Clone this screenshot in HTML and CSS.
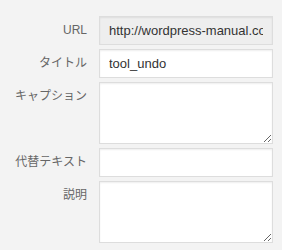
FILE: index.html
```html
<!DOCTYPE html>
<html lang="ja">
<head>
    <meta charset="UTF-8">
    <title>Attachment details</title>
    <link rel="stylesheet" href="styles.css">
</head>
<body>
    <form class="settings">
        <label class="setting-label" for="url">URL</label>
        <input class="field readonly" type="text" id="url" value="http://wordpress-manual.com/wp-content/uploads/tool_undo.png" readonly>

        <label class="setting-label" for="title">タイトル</label>
        <input class="field" type="text" id="title" value="tool_undo">

        <label class="setting-label" for="caption">キャプション</label>
        <textarea class="field area" id="caption"></textarea>

        <label class="setting-label" for="alt">代替テキスト</label>
        <input class="field" type="text" id="alt">

        <label class="setting-label" for="desc">説明</label>
        <textarea class="field area" id="desc"></textarea>
    </form>
</body>
</html>
```

FILE: styles.css
```css
body {
    margin: 0;
    background: #f3f3f3;
    font-family: "Liberation Sans", "Noto Sans CJK JP", sans-serif;
}

.settings {
    display: grid;
    grid-template-columns: 1fr 174px;
    column-gap: 12px;
    row-gap: 4px;
    padding: 16px 9px 0 0;
}

.setting-label {
    text-align: right;
    color: #666;
    font-size: 12px;
    line-height: 17px;
    padding-top: 6px;
}

.field {
    box-sizing: border-box;
    width: 174px;
    height: 29px;
    margin: 0;
    padding: 0 9px;
    border: 1px solid #ddd;
    border-radius: 0;
    background: #fff;
    color: #333;
    font-family: "Liberation Sans", "Noto Sans CJK JP", sans-serif;
    font-size: 13px;
    box-shadow: inset 0 1px 2px rgba(0, 0, 0, 0.07);
    outline: none;
}

.readonly {
    background: #eee;
}

.area {
    height: 62px;
    padding: 6px 9px;
    resize: both;
}
```
